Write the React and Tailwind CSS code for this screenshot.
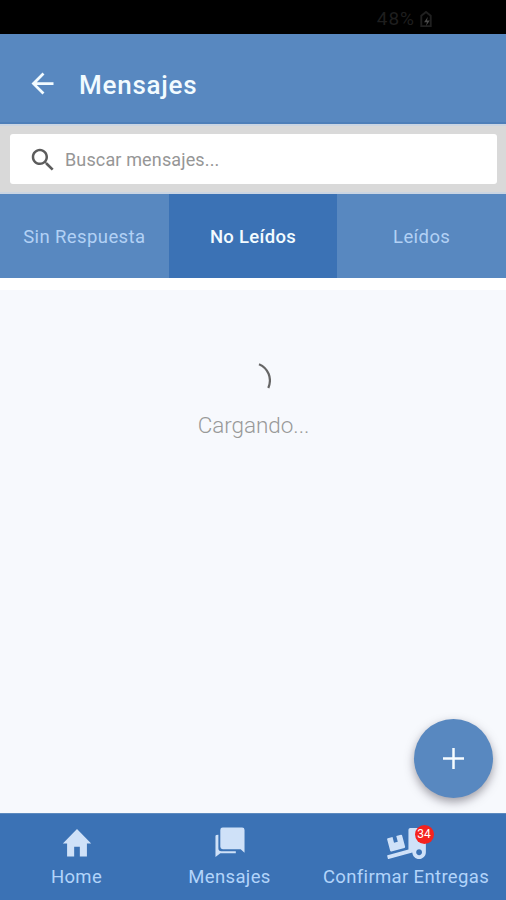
import { FaTruckLoading } from "react-icons/fa";

function Icon({ d, className }) {
  return (
    <svg viewBox="0 0 24 24" preserveAspectRatio="none" fill="currentColor" className={className}>
      <path d={d} />
    </svg>
  );
}

const icons = {
  back: "M20 11H7.83l5.59-5.59L12 4l-8 8 8 8 1.41-1.41L7.83 13H20v-2z",
  search:
    "M15.5 14h-.79l-.28-.27C15.41 12.59 16 11.11 16 9.5 16 5.91 13.09 3 9.5 3S3 5.91 3 9.5 5.91 16 9.5 16c1.61 0 3.09-.59 4.23-1.57l.27.28v.79l5 4.99L20.49 19l-4.99-5zm-6 0C7.01 14 5 11.99 5 9.5S7.01 5 9.5 5 14 7.01 14 9.5 11.99 14 9.5 14z",
  home: "M10 20v-6h4v6h5v-8h3L12 3 2 12h3v8z",
};

function Tab({ label, active }) {
  return (
    <button
      className={
        active
          ? "flex items-center justify-center bg-[#3b72b5] pt-[3px] text-[18.5px] font-medium tracking-[0.3px] text-[#f2fbff]"
          : "flex items-center justify-center bg-[#5888c0] pt-[3px] text-[18.5px] tracking-[0.4px] text-[#b2d1f5]"
      }
    >
      {label}
    </button>
  );
}

function NavItem({ label, children, className }) {
  return (
    <button className={"flex flex-col items-center pt-[11px] " + className}>
      <span className="flex h-9 items-center justify-center text-[#cfe1f8]">{children}</span>
      <span className="mt-[3px] text-[18.5px] leading-[26px] whitespace-nowrap text-[#b2d4fa]">{label}</span>
    </button>
  );
}

export default function App() {
  return (
    <div className="flex h-[900px] w-[506px] flex-col overflow-hidden bg-[#f7f9fd] font-[Roboto,sans-serif]">
      <div className="flex h-[34px] shrink-0 items-center justify-end gap-1 bg-black pt-1 pr-[73px] text-[19px] tracking-[1px] text-[#1e1e1e]">
        <span>48%</span>
        <svg viewBox="0 0 14 18" className="h-[17px] w-[14px]">
          <path d="M2 5 7 1l5 4v11H2z" fill="none" stroke="#202020" strokeWidth="2" />
          <path d="M9 6 5 12h3l-1 4 4-6H8z" fill="#4a4a4a" />
        </svg>
      </div>

      <header className="flex h-[90px] shrink-0 items-center border-b-2 border-[#4e7fb9] bg-[#5888c0] pt-3.5 pl-[26px]">
        <Icon d={icons.back} className="-mt-1 h-[33px] w-[33px] text-[#f2fbff]" />
        <h1 className="ml-[20px] text-[26px] font-medium tracking-[0.75px] text-[#f2fbff]">Mensajes</h1>
      </header>

      <div className="h-[70px] shrink-0 border-y-2 border-[#cbd5e2] bg-[#d9d9d9] pt-2 pr-[9px] pb-2 pl-2.5">
        <div className="flex h-[50px] items-center rounded-[3px] bg-white pl-[18px]">
          <Icon d={icons.search} className="mt-0.5 h-[30px] w-[30px] text-[#5c5c5c]" />
          <span className="ml-[7px] pt-px text-[18px] tracking-[0.14px] text-[#969696]">Buscar mensajes...</span>
        </div>
      </div>

      <div className="grid h-[84px] shrink-0 grid-cols-3">
        <Tab label="Sin Respuesta" />
        <Tab label="No Leídos" active />
        <Tab label="Leídos" />
      </div>
      <div className="h-3 shrink-0 bg-white" />

      <main className="relative flex flex-1 flex-col items-center pt-[68px]">
        <svg viewBox="0 0 36 36" className="h-[36px] w-[36px]" fill="none">
          <path d="M24 6.2C33 10 37.5 20 33.3 30" stroke="#666" strokeWidth="2.2" />
        </svg>
        <p className="mt-4 pl-px text-[22.5px] leading-[30px] font-light tracking-[-0.05px] text-[#999]">
          Cargando...
        </p>
        <button className="absolute right-[13px] bottom-[15px] flex h-[79px] w-[79px] items-center justify-center rounded-full bg-[#5888c0] shadow-[0_4px_10px_rgba(70,65,80,0.5)]">
          <svg viewBox="0 0 22 22" className="-mt-px mr-px h-[21px] w-[21px]" stroke="#f6fcff" strokeWidth="2.6">
            <path d="M11 0v22M0 11h22" />
          </svg>
        </button>
      </main>

      <nav className="flex h-[87px] shrink-0 border-t border-[#5c8abf] bg-[#3b72b5]">
        <NavItem label="Home" className="w-[153px] tracking-[0.35px]">
          <Icon d={icons.home} className="h-[39px] w-[34px] shrink-0" />
        </NavItem>
        <NavItem label="Mensajes" className="w-[153px] tracking-[0.35px]">
          <svg viewBox="0 0 32 32" className="-mt-px h-[31px] w-[32px]" fill="currentColor">
            <path d="M8.5 0.5h20q2.5 0 2.5 2.5v23.5l-4-3.5H8.5q-2.5 0-2.5-2.5V3q0-2.5 2.5-2.5z" />
            <path d="M1 9q0-1 3-1v14q0 3 3 3h15v2H6l-5 4z" />
          </svg>
        </NavItem>
        <NavItem label="Confirmar Entregas" className="w-[200px] tracking-[0.35px]">
          <span className="relative">
            <FaTruckLoading className="h-[31px] w-[39px]" />
            <span className="absolute -top-[3px] left-[28px] flex h-[19px] w-[19px] items-center justify-center rounded-full bg-[#f5221e] text-[12px] tracking-normal text-white">
              34
            </span>
          </span>
        </NavItem>
      </nav>
    </div>
  );
}
